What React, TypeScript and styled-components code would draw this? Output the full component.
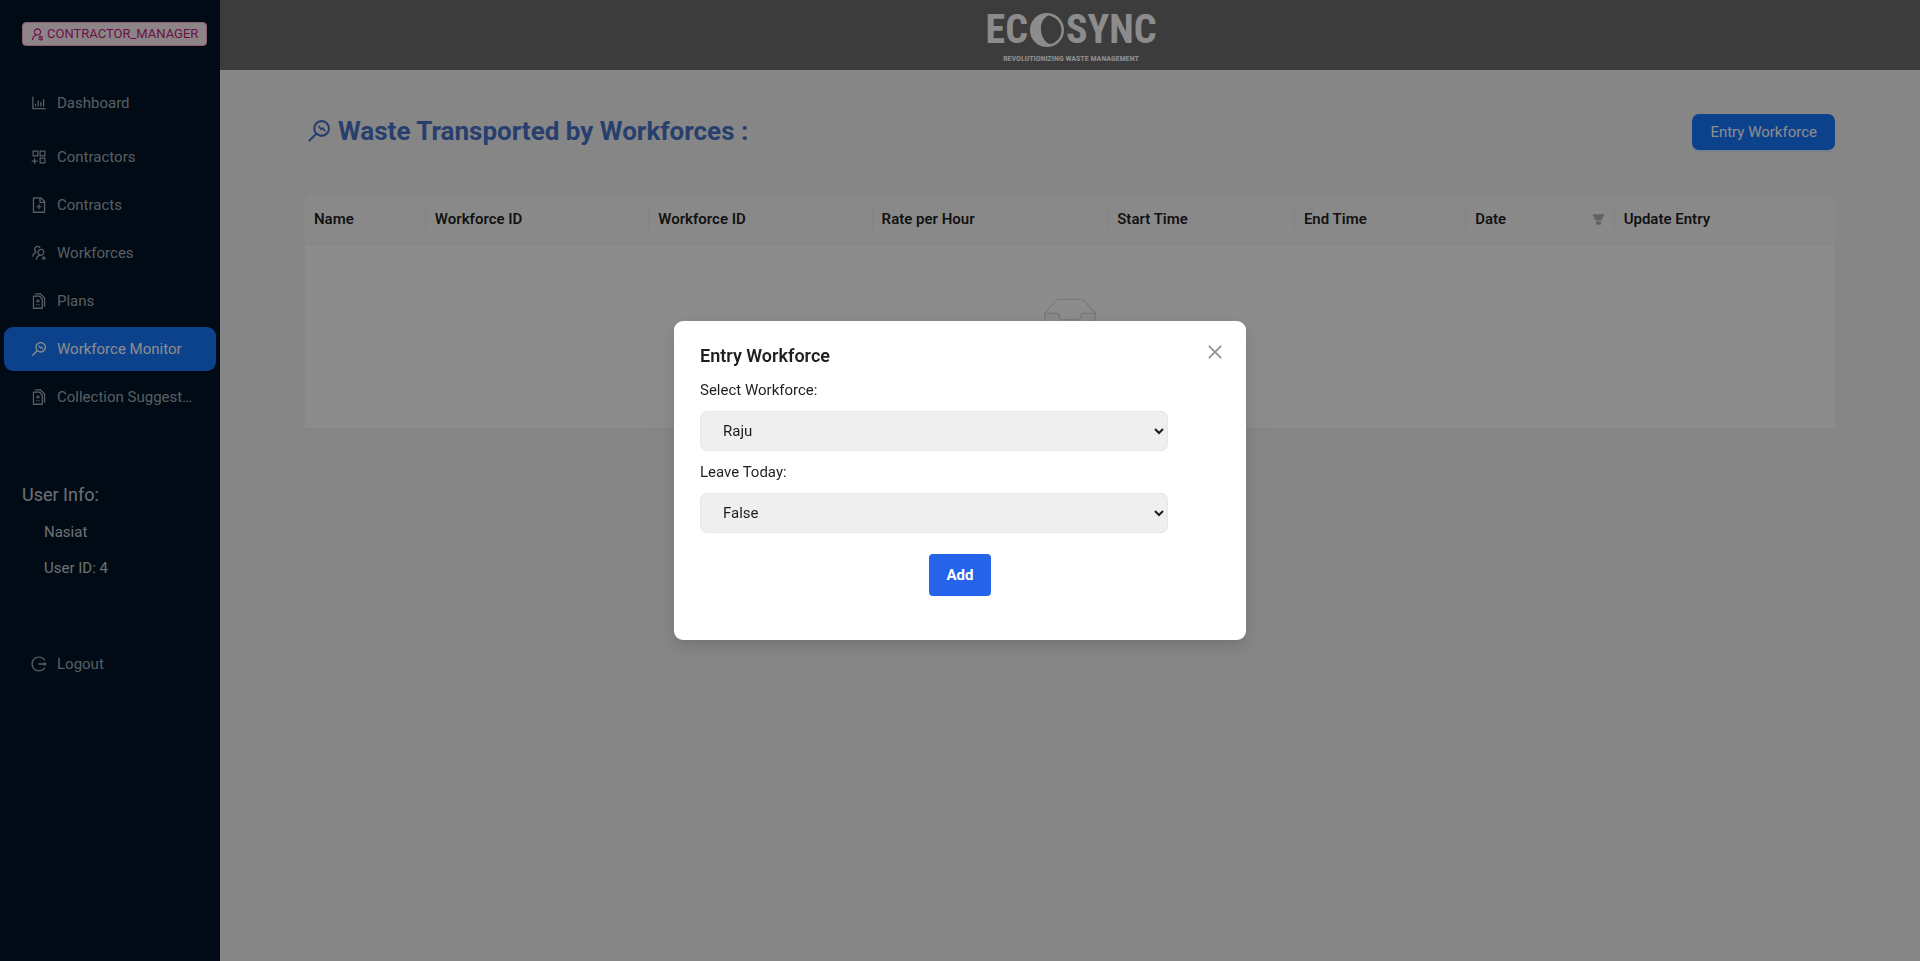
import React from "react";
import styled, { createGlobalStyle, css } from "styled-components";
import {
  AiOutlineAppstoreAdd,
  AiOutlineBarChart,
  AiOutlineClose,
  AiOutlineDiff,
  AiOutlineFileAdd,
  AiOutlineLogout,
  AiOutlineMonitor,
  AiOutlineUserSwitch,
  AiOutlineUsergroupAdd,
  AiFillFilter,
} from "react-icons/ai";
import type { IconType } from "react-icons";

const GlobalStyle = createGlobalStyle`
  *, *::before, *::after { box-sizing: border-box; }
  body {
    margin: 0;
    background: #f5f5f5;
    color: rgba(0, 0, 0, 0.88);
    font-family: Roboto, "Liberation Sans", sans-serif;
    font-size: 15px;
    line-height: 24px;
  }
  h1, h2, p { margin: 0; }
  button, select { font: inherit; }
`;

const Shell = styled.div`
  display: flex;
  min-height: 100vh;
`;

const Sidebar = styled.aside`
  flex: 0 0 220px;
  min-width: 0;
  display: flex;
  flex-direction: column;
  align-items: stretch;
  padding-top: 22px;
  background: #001529;
`;

const RoleTag = styled.span`
  display: flex;
  align-items: center;
  align-self: flex-start;
  gap: 2px;
  height: 24px;
  margin-left: 22px;
  padding: 0 8px 0 7px;
  border: 1px solid #ffadd2;
  border-radius: 4px;
  background: #fff0f6;
  color: #c41d7f;
  font-size: 13px;
  white-space: nowrap;
`;

const Menu = styled.nav`
  display: flex;
  flex-direction: column;
  gap: 4px;
  padding: 0 4px;
`;

const MenuLink = styled.a<{ $active?: boolean }>`
  display: flex;
  align-items: center;
  gap: 9px;
  height: 44px;
  padding: 0 21px 0 26px;
  border-radius: 9px;
  color: rgba(255, 255, 255, 0.65);
  text-decoration: none;

  svg {
    flex: none;
  }

  span {
    overflow: hidden;
    text-overflow: ellipsis;
    white-space: nowrap;
  }

  ${({ $active }) =>
    $active &&
    css`
      background: #1677ff;
      color: #fff;
    `}
`;

const UserInfo = styled.section`
  display: flex;
  flex-direction: column;
  gap: 12px;
  padding: 0 22px;
  color: rgba(255, 255, 255, 0.8);

  h2 {
    font-size: 18px;
    font-weight: 400;
    line-height: 26px;
  }

  p {
    padding-left: 22px;
  }
`;

const Spacer = styled.div<{ $size: number }>`
  flex: none;
  height: ${({ $size }) => $size}px;
`;

const Page = styled.div`
  flex: 1;
  min-width: 0;
`;

const Header = styled.header`
  display: flex;
  flex-direction: column;
  align-items: center;
  height: 70px;
  padding-top: 8px;
  padding-left: 2px;
  background: #6e6e6e;
  color: #fff;
  font-family: "Roboto Condensed", "Liberation Sans Narrow", Roboto, sans-serif;
`;

const Wordmark = styled.div`
  display: flex;
  align-items: center;
  gap: 2px;
  font-size: 40px;
  font-weight: 700;
  line-height: 44px;
`;

const Tagline = styled.div`
  font-size: 8px;
  font-weight: 700;
  line-height: 14px;
`;

const Content = styled.main`
  padding: 44px 85px;
`;

const TitleBar = styled.div`
  display: flex;
  align-items: flex-start;
  justify-content: space-between;
  margin-bottom: 44px;
`;

const Title = styled.h1`
  display: flex;
  align-items: center;
  gap: 5px;
  color: #4874cb;
  font-size: 26px;
  font-weight: 700;
  line-height: 34px;
`;

const PrimaryButton = styled.button`
  height: 36px;
  padding: 0 18px;
  border: 0;
  border-radius: 7px;
  background: #1677ff;
  box-shadow: 0 2px 0 rgba(5, 145, 255, 0.1);
  color: #fff;
`;

const Table = styled.table`
  width: 100%;
  table-layout: fixed;
  border-collapse: separate;
  border-spacing: 0;
  border-radius: 9px 9px 0 0;
  background: #fff;
`;

const HeadCell = styled.th<{ $width: number }>`
  position: relative;
  width: ${({ $width }) => $width}%;
  padding: 13px 9px;
  border-bottom: 1px solid #f0f0f0;
  background: #fafafa;
  font-weight: 600;
  text-align: left;

  &:first-child {
    border-top-left-radius: 9px;
  }

  &:last-child {
    border-top-right-radius: 9px;
  }

  &:not(:last-child)::after {
    content: "";
    position: absolute;
    top: 13px;
    right: 0;
    width: 1px;
    height: 24px;
    background: #f0f0f0;
  }
`;

const HeadContent = styled.div`
  display: flex;
  align-items: center;
  justify-content: space-between;

  svg {
    color: rgba(0, 0, 0, 0.29);
  }
`;

const EmptyCell = styled.td`
  padding: 53px 9px 52px;
  border-bottom: 1px solid #f0f0f0;
  color: rgba(0, 0, 0, 0.25);
  text-align: center;

  svg {
    display: block;
    margin: 0 auto 9px;
  }
`;

const Backdrop = styled.div`
  position: fixed;
  inset: 0;
  display: flex;
  align-items: center;
  justify-content: center;
  background: rgba(0, 0, 0, 0.45);
`;

const Dialog = styled.div`
  position: relative;
  width: 572px;
  max-width: calc(100vw - 32px);
  padding: 22px 26px 44px;
  border-radius: 9px;
  background: #fff;
  box-shadow: 0 6px 16px rgba(0, 0, 0, 0.08), 0 3px 6px -4px rgba(0, 0, 0, 0.12),
    0 9px 28px 8px rgba(0, 0, 0, 0.05);
`;

const DialogTitle = styled.h2`
  margin-bottom: 9px;
  font-size: 18px;
  font-weight: 600;
  line-height: 26px;
`;

const CloseButton = styled.button`
  position: absolute;
  top: 19px;
  right: 19px;
  display: flex;
  align-items: center;
  justify-content: center;
  width: 24px;
  height: 24px;
  padding: 0;
  border: 0;
  background: none;
  color: rgba(0, 0, 0, 0.45);
`;

const Form = styled.form`
  display: flex;
  flex-direction: column;
`;

const Field = styled.div`
  display: flex;
  flex-direction: column;
  gap: 9px;
  margin-bottom: 9px;
`;

const Select = styled.select`
  width: 90%;
  height: 40px;
  padding: 0 0 0 18px;
  border: 1px solid #e5e7eb;
  border-radius: 7px;
  background: #efefef;
  color: rgba(0, 0, 0, 0.88);
`;

const AddButton = styled.button`
  align-self: center;
  height: 42px;
  margin-top: 12px;
  padding: 0 18px;
  border: 0;
  border-radius: 4px;
  background: #2563eb;
  color: #fff;
  font-weight: 700;
`;

const menuItems: { label: string; icon: IconType; active?: boolean }[] = [
  { label: "Contractors", icon: AiOutlineAppstoreAdd },
  { label: "Contracts", icon: AiOutlineFileAdd },
  { label: "Workforces", icon: AiOutlineUsergroupAdd },
  { label: "Plans", icon: AiOutlineDiff },
  { label: "Workforce Monitor", icon: AiOutlineMonitor, active: true },
  { label: "Collection Suggest…", icon: AiOutlineDiff },
];

const columns = [
  { label: "Name", width: 7.9 },
  { label: "Workforce ID", width: 14.6 },
  { label: "Workforce ID", width: 14.6 },
  { label: "Rate per Hour", width: 15.4 },
  { label: "Start Time", width: 12.2 },
  { label: "End Time", width: 11.2 },
  { label: "Date", width: 9.7, filter: true },
  { label: "Update Entry", width: 14.4 },
];

function CrescentO() {
  return (
    <svg width="34" height="34" viewBox="0 0 34 34" aria-label="O">
      <path
        fill="#fff"
        fillRule="evenodd"
        d="M17 0C26.500 0 34 7.500 34 17S26.500 34 17 34 0 26.500 0 17 7.500 0 17 0ZM18.500 2.500C12.500 5 10.500 11 11 17.500S15.500 30 20 31C26.500 30 31.500 24.500 31.500 17S25.500 3.500 18.500 2.500Z"
      />
    </svg>
  );
}

function EmptyTray() {
  return (
    <svg width="70" height="45" viewBox="0 0 64 41" aria-hidden="true">
      <g transform="translate(0 1)" fill="none" fillRule="evenodd">
        <ellipse fill="#f5f5f5" cx="32" cy="33" rx="32" ry="7" />
        <g fillRule="nonzero" stroke="#d9d9d9">
          <path d="M55 12.760 44.854 1.258C44.367.474 43.656 0 42.907 0H21.093c-.749 0-1.460.474-1.947 1.257L9 12.761V22h46v-9.240z" />
          <path
            d="M41.613 15.931c0-1.605.994-2.930 2.227-2.931H55v18.137C55 33.260 53.680 35 52.050 35h-40.100C10.320 35 9 33.259 9 31.137V13h11.160c1.233 0 2.227 1.323 2.227 2.928v.022c0 1.605 1.005 2.901 2.237 2.901h14.752c1.232 0 2.237-1.308 2.237-2.913v-.007z"
            fill="#fafafa"
          />
        </g>
      </g>
    </svg>
  );
}

export default function App() {
  return (
    <>
      <GlobalStyle />
      <Shell>
        <Sidebar>
          <RoleTag>
            <AiOutlineUserSwitch size={15} />
            CONTRACTOR_MANAGER
          </RoleTag>
          <Spacer $size={35} />
          <Menu>
            <MenuLink href="#dashboard">
              <AiOutlineBarChart size={18} />
              <span>Dashboard</span>
            </MenuLink>
          </Menu>
          <Spacer $size={10} />
          <Menu>
            {menuItems.map(({ label, icon: Icon, active }) => (
              <MenuLink key={label} href="#section" $active={active}>
                <Icon size={18} />
                <span>{label}</span>
              </MenuLink>
            ))}
          </Menu>
          <Spacer $size={63} />
          <UserInfo>
            <h2>User Info:</h2>
            <p>Nasiat</p>
            <p>User ID: 4</p>
          </UserInfo>
          <Spacer $size={62} />
          <Menu>
            <MenuLink href="#logout">
              <AiOutlineLogout size={18} />
              <span>Logout</span>
            </MenuLink>
          </Menu>
        </Sidebar>
        <Page>
          <Header>
            <Wordmark>
              <span>EC</span>
              <CrescentO />
              <span>SYNC</span>
            </Wordmark>
            <Tagline>REVOLUTIONIZING WASTE MANAGEMENT</Tagline>
          </Header>
          <Content>
            <TitleBar>
              <Title>
                <AiOutlineMonitor size={28} />
                Waste Transported by Workforces :
              </Title>
              <PrimaryButton type="button">Entry Workforce</PrimaryButton>
            </TitleBar>
            <Table>
              <thead>
                <tr>
                  {columns.map(({ label, width, filter }, index) => (
                    <HeadCell key={index} $width={width} scope="col">
                      <HeadContent>
                        {label}
                        {filter && <AiFillFilter size={15} />}
                      </HeadContent>
                    </HeadCell>
                  ))}
                </tr>
              </thead>
              <tbody>
                <tr>
                  <EmptyCell colSpan={columns.length}>
                    <EmptyTray />
                    No data
                  </EmptyCell>
                </tr>
              </tbody>
            </Table>
          </Content>
        </Page>
      </Shell>
      <Backdrop>
        <Dialog role="dialog" aria-modal="true" aria-labelledby="dialog-title">
          <DialogTitle id="dialog-title">Entry Workforce</DialogTitle>
          <CloseButton type="button" aria-label="Close">
            <AiOutlineClose size={20} />
          </CloseButton>
          <Form>
            <Field>
              <label htmlFor="workforce">Select Workforce:</label>
              <Select id="workforce" defaultValue="Raju">
                <option>Raju</option>
              </Select>
            </Field>
            <Field>
              <label htmlFor="leave">Leave Today:</label>
              <Select id="leave" defaultValue="False">
                <option>False</option>
                <option>True</option>
              </Select>
            </Field>
            <AddButton type="button">Add</AddButton>
          </Form>
        </Dialog>
      </Backdrop>
    </>
  );
}
